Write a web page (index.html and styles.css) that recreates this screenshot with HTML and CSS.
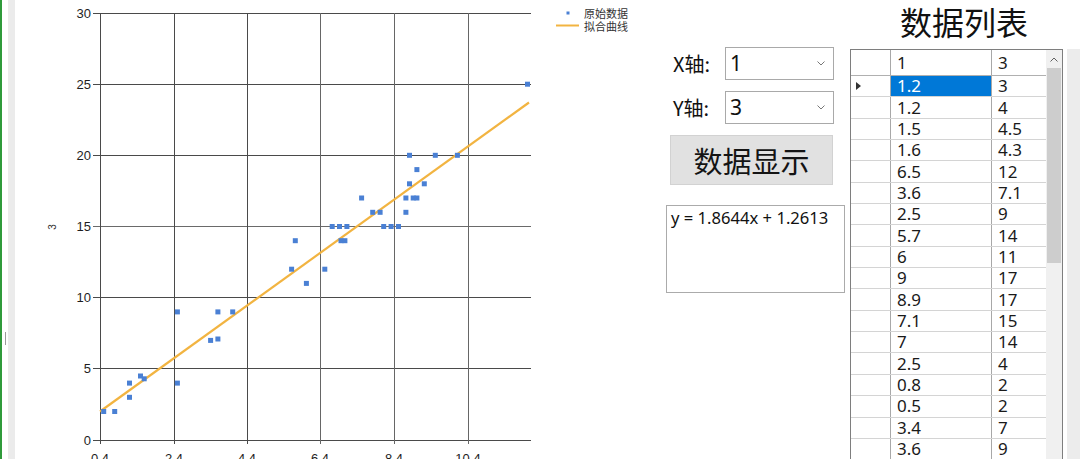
FILE: index.html
```html
<!DOCTYPE html>
<html lang="zh-CN">
<head>
<meta charset="utf-8">
<title>数据列表</title>
<link rel="stylesheet" href="styles.css">
</head>
<body>
<div class="window">
  <div class="edge">
    <div class="edge-green"></div>
    <div class="edge-gap"><span class="edge-handle"></span></div>
    <div class="edge-band"></div>
  </div>

  <div class="chart">
    <svg class="chart-svg" width="634" height="459" viewBox="16 0 634 459" xmlns="http://www.w3.org/2000/svg">
      <g class="grid" stroke="#4a4a4a" stroke-width="1" shape-rendering="crispEdges">
        <line x1="93" y1="13.5" x2="531" y2="13.5"/>
        <line x1="93" y1="84.5" x2="531" y2="84.5"/>
        <line x1="93" y1="155.5" x2="531" y2="155.5"/>
        <line x1="93" y1="226.5" x2="531" y2="226.5" stroke="#6a6a6a"/>
        <line x1="93" y1="297.5" x2="531" y2="297.5"/>
        <line x1="93" y1="368.5" x2="531" y2="368.5"/>
        <line x1="93" y1="440.5" x2="531" y2="440.5"/>
        <line x1="100.5" y1="13" x2="100.5" y2="444"/>
        <line x1="174.5" y1="13" x2="174.5" y2="444"/>
        <line x1="247.5" y1="13" x2="247.5" y2="444"/>
        <line x1="320.5" y1="13" x2="320.5" y2="444" stroke="#666"/>
        <line x1="394.5" y1="13" x2="394.5" y2="444" stroke="#666"/>
        <line x1="468.5" y1="13" x2="468.5" y2="444" stroke="#666"/>
      </g>
      <g class="ylabels" font-family="Liberation Sans, Arial, sans-serif" font-size="13" fill="#1e1e1e" text-anchor="end">
        <text x="91" y="18">30</text>
        <text x="91" y="89">25</text>
        <text x="91" y="160">20</text>
        <text x="91" y="231">15</text>
        <text x="91" y="302">10</text>
        <text x="91" y="373">5</text>
        <text x="91" y="445">0</text>
      </g>
      <g class="xlabels" font-family="Liberation Sans, Arial, sans-serif" font-size="13" fill="#1e1e1e" text-anchor="middle">
        <text x="100" y="463">0.4</text>
        <text x="174" y="463">2.4</text>
        <text x="247" y="463">4.4</text>
        <text x="320" y="463">6.4</text>
        <text x="394" y="463">8.4</text>
        <text x="468" y="463">10.4</text>
      </g>
      <text x="52" y="227" font-family="Liberation Sans, Arial, sans-serif" font-size="10" fill="#333" text-anchor="middle" transform="rotate(-90 52 227)" dominant-baseline="central">3</text>

      <line x1="100" y1="411.5" x2="529" y2="102.5" stroke="#f2b441" stroke-width="2.2"/>

      <g class="points" fill="#4a80d4">
        <rect x="101.2" y="409" width="5" height="5"/>
        <rect x="112.2" y="409" width="5" height="5"/>
        <rect x="127" y="394.8" width="5" height="5"/>
        <rect x="127" y="380.6" width="5" height="5"/>
        <rect x="138" y="373.5" width="5" height="5"/>
        <rect x="141.7" y="376.3" width="5" height="5"/>
        <rect x="174.9" y="309.4" width="5" height="5"/>
        <rect x="174.9" y="380.6" width="5" height="5"/>
        <rect x="208.1" y="337.9" width="5" height="5"/>
        <rect x="215.4" y="336.5" width="5" height="5"/>
        <rect x="215.4" y="309.4" width="5" height="5"/>
        <rect x="230.2" y="309.4" width="5" height="5"/>
        <rect x="289.1" y="266.7" width="5" height="5"/>
        <rect x="292.8" y="238.2" width="5" height="5"/>
        <rect x="303.9" y="280.9" width="5" height="5"/>
        <rect x="322.3" y="266.7" width="5" height="5"/>
        <rect x="329.7" y="224" width="5" height="5"/>
        <rect x="337" y="224" width="5" height="5"/>
        <rect x="338.5" y="238.2" width="5" height="5"/>
        <rect x="342.4" y="238.2" width="5" height="5"/>
        <rect x="344.4" y="224" width="5" height="5"/>
        <rect x="359.1" y="195.5" width="5" height="5"/>
        <rect x="370.2" y="209.8" width="5" height="5"/>
        <rect x="377.6" y="209.8" width="5" height="5"/>
        <rect x="381.2" y="224" width="5" height="5"/>
        <rect x="388.6" y="224" width="5" height="5"/>
        <rect x="396" y="224" width="5" height="5"/>
        <rect x="403.4" y="209.8" width="5" height="5"/>
        <rect x="403.4" y="195.5" width="5" height="5"/>
        <rect x="407" y="181.3" width="5" height="5"/>
        <rect x="407" y="152.8" width="5" height="5"/>
        <rect x="410.7" y="195.5" width="5" height="5"/>
        <rect x="414.4" y="195.5" width="5" height="5"/>
        <rect x="414.4" y="167.1" width="5" height="5"/>
        <rect x="421.8" y="181.3" width="5" height="5"/>
        <rect x="432.8" y="152.8" width="5" height="5"/>
        <rect x="454.9" y="152.8" width="5" height="5"/>
        <rect x="525" y="81.7" width="5" height="5"/>
      </g>

      <g class="legend" font-family="Noto Sans CJK SC, sans-serif" font-size="11" fill="#333">
        <rect x="566.5" y="11.5" width="3" height="3" fill="#4a80d4"/>
        <text x="584" y="17.5">原始数据</text>
        <line x1="556" y1="25.5" x2="579" y2="25.5" stroke="#f2b441" stroke-width="2"/>
        <text x="584" y="31">拟合曲线</text>
      </g>
    </svg>
  </div>

  <div class="controls">
    <div class="field">
      <span class="field-label">X轴:</span>
      <div class="combo"><span class="combo-value">1</span><svg class="chev" width="8" height="5" viewBox="0 0 8 5"><polyline points="0.5,0.5 4,4 7.5,0.5" fill="none" stroke="#777" stroke-width="1"/></svg></div>
    </div>
    <div class="field field-second">
      <span class="field-label">Y轴:</span>
      <div class="combo"><span class="combo-value">3</span><svg class="chev" width="8" height="5" viewBox="0 0 8 5"><polyline points="0.5,0.5 4,4 7.5,0.5" fill="none" stroke="#777" stroke-width="1"/></svg></div>
    </div>
    <div class="btn">数据显示</div>
    <div class="textbox">y = 1.8644x + 1.2613</div>
  </div>

  <div class="list-col">
    <div class="list-title">数据列表</div>
    <div class="list-row">
      <div class="grid-box">
        <div class="grid-body">
          <div class="grow header">
            <div class="c rh"></div><div class="c c1">1</div><div class="c c2">3</div>
          </div>
          <div class="grow"><div class="c rh"><span class="cur"></span></div><div class="c c1 sel">1.2</div><div class="c c2">3</div></div>
          <div class="grow"><div class="c rh"></div><div class="c c1">1.2</div><div class="c c2">4</div></div>
          <div class="grow"><div class="c rh"></div><div class="c c1">1.5</div><div class="c c2">4.5</div></div>
          <div class="grow"><div class="c rh"></div><div class="c c1">1.6</div><div class="c c2">4.3</div></div>
          <div class="grow"><div class="c rh"></div><div class="c c1">6.5</div><div class="c c2">12</div></div>
          <div class="grow"><div class="c rh"></div><div class="c c1">3.6</div><div class="c c2">7.1</div></div>
          <div class="grow"><div class="c rh"></div><div class="c c1">2.5</div><div class="c c2">9</div></div>
          <div class="grow"><div class="c rh"></div><div class="c c1">5.7</div><div class="c c2">14</div></div>
          <div class="grow"><div class="c rh"></div><div class="c c1">6</div><div class="c c2">11</div></div>
          <div class="grow"><div class="c rh"></div><div class="c c1">9</div><div class="c c2">17</div></div>
          <div class="grow"><div class="c rh"></div><div class="c c1">8.9</div><div class="c c2">17</div></div>
          <div class="grow"><div class="c rh"></div><div class="c c1">7.1</div><div class="c c2">15</div></div>
          <div class="grow"><div class="c rh"></div><div class="c c1">7</div><div class="c c2">14</div></div>
          <div class="grow"><div class="c rh"></div><div class="c c1">2.5</div><div class="c c2">4</div></div>
          <div class="grow"><div class="c rh"></div><div class="c c1">0.8</div><div class="c c2">2</div></div>
          <div class="grow"><div class="c rh"></div><div class="c c1">0.5</div><div class="c c2">2</div></div>
          <div class="grow"><div class="c rh"></div><div class="c c1">3.4</div><div class="c c2">7</div></div>
          <div class="grow"><div class="c rh"></div><div class="c c1">3.6</div><div class="c c2">9</div></div>
          <div class="grow"><div class="c rh"></div><div class="c c1">4</div><div class="c c2">9</div></div>
        </div>
        <div class="vscroll">
          <div class="vs-up"><svg width="8" height="5" viewBox="0 0 8 5"><polyline points="0.5,4.5 4,1 7.5,4.5" fill="none" stroke="#606060" stroke-width="1"/></svg></div>
          <div class="vs-thumb"></div>
        </div>
      </div>
      <div class="side-band"></div>
    </div>
  </div>
</div>
</body>
</html>
```

FILE: styles.css
```css
html, body {
  margin: 0;
  padding: 0;
}
body {
  width: 1080px;
  height: 459px;
  overflow: hidden;
  background: #ffffff;
  font-family: "Noto Sans", "Noto Sans CJK SC", sans-serif;
  color: #111;
}
.window {
  display: flex;
  height: 459px;
}

/* left window edge */
.edge {
  display: flex;
  width: 16px;
  flex: none;
}
.edge-green {
  width: 2px;
  background: #2f9a3a;
}
.edge-gap {
  width: 6px;
  position: relative;
}
.edge-handle {
  position: absolute;
  left: 3px;
  top: 332px;
  width: 1px;
  height: 13px;
  background: #9a9a9a;
}
.edge-band {
  width: 7px;
  background: #ebebeb;
}

/* chart */
.chart {
  width: 634px;
  flex: none;
}
.chart-svg {
  display: block;
}

/* controls */
.controls {
  width: 200px;
  flex: none;
  padding: 47px 0 0 16px;
  box-sizing: border-box;
  display: flex;
  flex-direction: column;
  align-items: flex-start;
  font-family: "Noto Sans CJK SC", sans-serif;
}
.field {
  display: flex;
  align-items: center;
  height: 33px;
  margin-left: 7px;
}
.field-second {
  margin-top: 11px;
}
.field-label {
  width: 52px;
  font-size: 20px;
  color: #111;
  line-height: 33px;
}
.combo {
  width: 109px;
  height: 33px;
  box-sizing: border-box;
  border: 1px solid #a9a9a9;
  background: #fff;
  display: flex;
  align-items: center;
  justify-content: space-between;
  padding: 0 8px 0 4px;
}
.combo-value {
  font-family: "Noto Sans", sans-serif;
  font-size: 21px;
  line-height: 31px;
  color: #111;
}
.chev {
  display: block;
}
.btn {
  margin: 11px 0 0 4px;
  width: 163px;
  height: 50px;
  box-sizing: border-box;
  background: #e1e1e1;
  border: 1px solid #d2d2d2;
  display: flex;
  align-items: center;
  justify-content: center;
  font-size: 29px;
  color: #141414;
}
.textbox {
  margin-top: 20px;
  width: 179px;
  height: 88px;
  box-sizing: border-box;
  border: 1px solid #ababab;
  padding: 1px 0 0 4px;
  font-family: "Noto Sans", sans-serif;
  font-size: 16.6px;
  line-height: 22px;
  color: #111;
}

/* list */
.list-col {
  flex: 1;
  display: flex;
  flex-direction: column;
  min-width: 0;
}
.list-title {
  height: 49px;
  padding-left: 50px;
  font-family: "Noto Sans CJK SC", sans-serif;
  font-size: 32px;
  line-height: 43px;
  color: #111;
}
.list-row {
  flex: 1;
  display: flex;
  min-height: 0;
}
.grid-box {
  width: 213px;
  border: 1px solid #7e7e7e;
  border-bottom: none;
  box-sizing: border-box;
  display: flex;
  overflow: hidden;
}
.grid-body {
  width: 195px;
  flex: none;
  font-family: "Noto Sans", sans-serif;
  font-size: 17px;
  color: #1a1a1a;
}
.grow {
  display: flex;
  height: 21.35px;
  box-sizing: border-box;
  border-bottom: 1px solid #d4d4d4;
}
.grow.header {
  height: 26px;
  border-bottom: 1px solid #b0b0b0;
}
.c {
  box-sizing: border-box;
  padding-left: 6px;
  display: flex;
  align-items: center;
  line-height: 20px;
  white-space: nowrap;
}
.rh {
  width: 40px;
  border-right: 1px solid #a8a8a8;
  padding-left: 5px;
}
.c1 {
  width: 101px;
  border-right: 1px solid #a8a8a8;
}
.c2 {
  width: 54px;
}
.sel {
  background: #0078d7;
  color: #fff;
}
.cur {
  width: 0;
  height: 0;
  border-top: 4px solid transparent;
  border-bottom: 4px solid transparent;
  border-left: 5px solid #333;
}
.vscroll {
  width: 16px;
  flex: none;
  background: #f0f0f0;
  display: flex;
  flex-direction: column;
  align-items: center;
}
.vs-up {
  height: 18px;
  display: flex;
  align-items: center;
  justify-content: center;
  width: 100%;
}
.vs-thumb {
  width: 14px;
  height: 195px;
  background: #cdcdcd;
}
.side-band {
  flex: 1;
  margin-left: 4px;
  background: #ececec;
}
```
